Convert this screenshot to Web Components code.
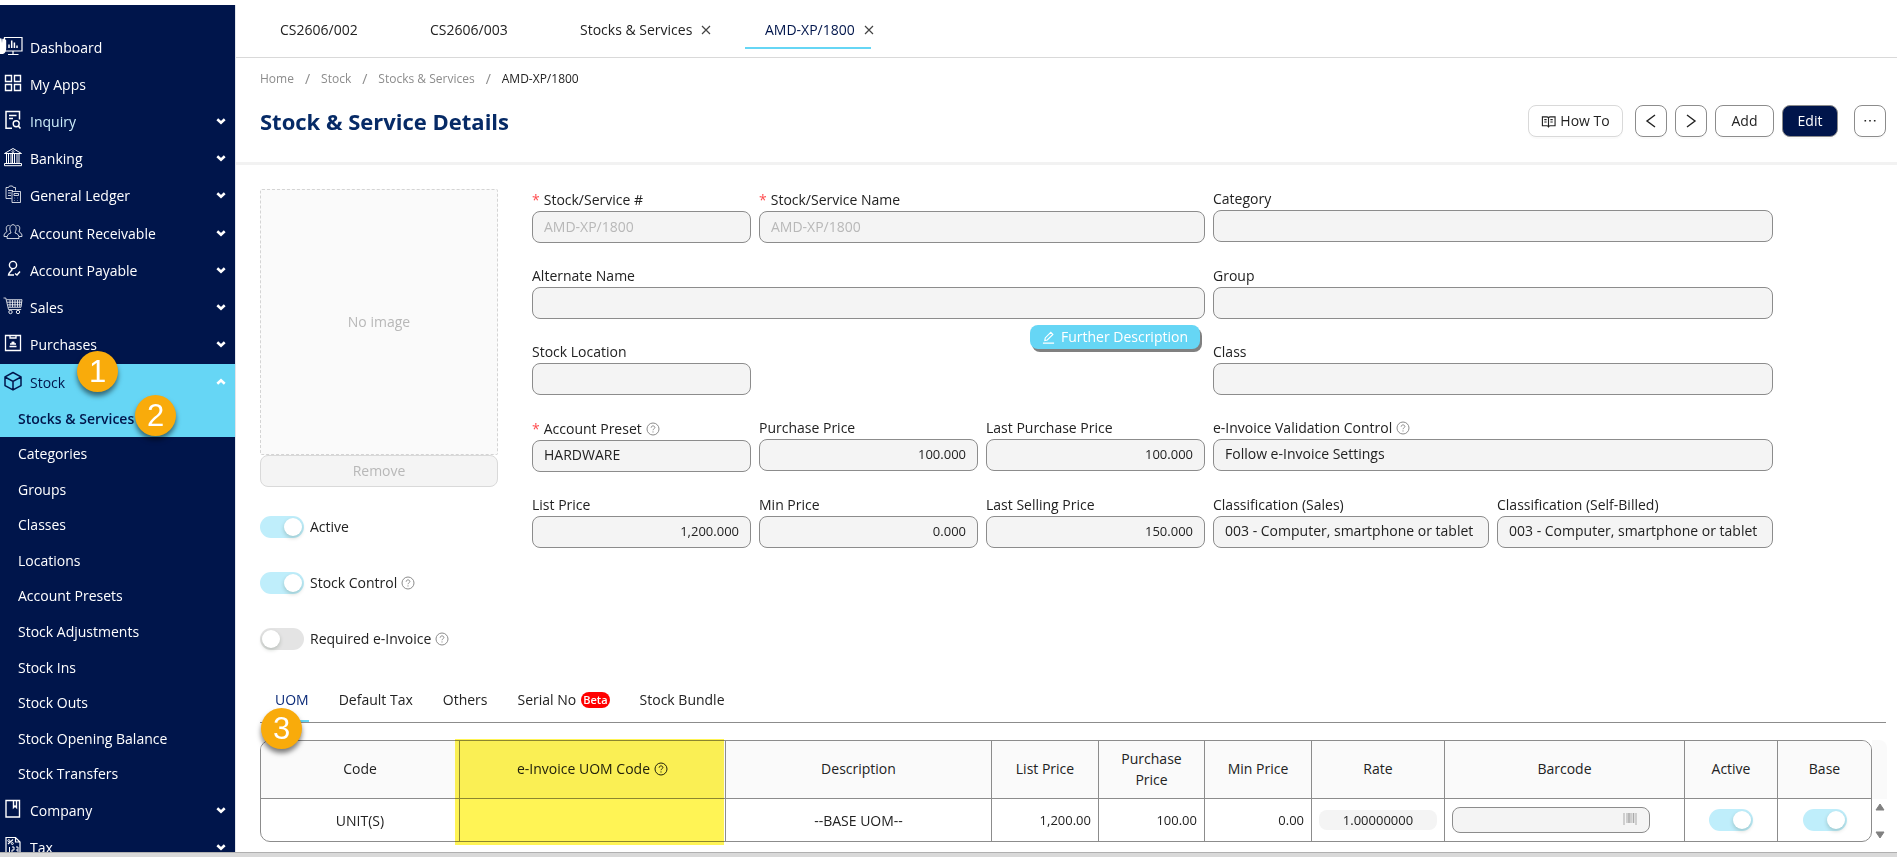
<!DOCTYPE html>
<html lang="en">
<head>
<meta charset="utf-8">
<title>Stock &amp; Service Details</title>
<style>
  html, body { margin: 0; height: 100%; }
  body {
    --navy: #00154b;
    --cyan: #66d6f5;
    --line: #8c8c8c;
    --field: #f4f4f4;
    --text: #222;
    font: 14px/20px "Open Sans", sans-serif;
    color: var(--text);
    background: #fff;
    overflow: hidden;
  }
</style>
</head>
<body>
<stock-app></stock-app>

<script>
// shared helper: attach an open root and fill it
function render(el, html) {
  el.attachShadow({ mode: "open" }).innerHTML = html;
}

const ICONS = {
  dashboard: ["0 0 20 20", `<path d="M1.5 1.5h17.500v13.500H1.500z M10 15v3.500 M5 18.500h10.500" stroke-width="1.200"/><path d="M6 12V8.500 M8.700 12V4.500 M11.400 12V6.500 M14 12V9.500" stroke-width="1.500"/>`],
  apps: ["0 0 20 20", `<path d="M2.500 2.500h6v6h-6z M11.500 2.500h6v6h-6z M2.500 11.500h6v6h-6z M11.500 11.500h6v6h-6z" stroke-width="1.400"/>`],
  inquiry: ["0 0 20 20", `<path d="M9 18.300H3V1.500h13.500v8 M6 5.500h7.500 M6 8.500h4" stroke-width="1.500"/><circle cx="13.200" cy="13.800" r="3" stroke-width="1.400"/><path d="M15.300 16l2.200 2.500" stroke-width="1.600"/>`],
  bank: ["0 0 20 20", `<path d="M1.500 6.500L10 1.500l8.500 5z M1.500 16.500h17v2.200h-17z M3.500 7v9 M5.500 7v9 M8 7v9 M9.500 7v9 M11.500 7v9 M14 7v9 M16 7v9" stroke-width="1"/><circle cx="10" cy="4.600" r="1" stroke-width=".8"/>`],
  ledger: ["0 0 20 20", `<path d="M8.500 14.500H3V3.500h2.500l1-1.500h3l1 1.500h2v3 M5 6.500h5 M5 9h3 M5 11.500h3" stroke-width=".8"/><path d="M9 7.500h8.500v11H9z M11 9.500h4.500v2H11z M11.500 14h.500 M14.500 14h.500 M11.500 16.500h.500 M14.500 16.500h.500" stroke-width=".8"/>`],
  receivable: ["0 0 20 20", `<path d="M7 8a3.200 4 0 1 1 6 0c-.300 1.500-1 2-1 3 3 .800 4 2 4 5.500H4c0-3.500 1-4.700 4-5.500 0-1-.700-1.500-1-3z M6.500 3.500C3.500 3 2.800 5.500 3.500 8c.500 1.500.500 2-.500 2.500-1.500.800-2 1.700-2 4h3 M13.500 3.500c3-.500 3.700 2 3 4.500-.500 1.500-.500 2 .500 2.500 1.500.800 2 1.700 2 4h-3" stroke-width=".8"/>`],
  payable: ["0 0 20 20", `<circle cx="10" cy="6" r="3.600" stroke-width="1.400"/><path d="M8 9.500c2 1 1 1.500-.500 3-1.300 1.300-2 2-2 3.500H11 M12 14.500l2 1.500 3-3.500" stroke-width="1.400"/>`],
  cart: ["0 0 20 20", `<path d="M.500 2h2.300L5.500 13.500h12.700 M3.500 3.700h15.500l-1 7.600H5.200 M4 6.200h15 M4.500 8.800h14 M7 4v7 M9.500 4v7 M12 4v7 M14.500 4v7 M16.700 4v7" stroke-width=".8"/><circle cx="7.500" cy="16" r="1.700" stroke-width=".9"/><circle cx="15" cy="16" r="1.700" stroke-width=".9"/>`],
  purchases: ["0 0 20 20", `<path d="M2.500 2.500h15v15h-15z M7 2.500v2.500h6V2.500 M6.500 13.500h7 M7 11h6 M10 11V8.500 M8.500 9.500h3" stroke-width="1.300"/>`],
  box: ["0 0 20 20", `<path d="M10 1.500l8 4.300v8.800l-8 4.300-8-4.300V5.800z M2 6l8 4.300L18 6 M10 10.300v8.300" stroke-width="1.500" stroke-linejoin="round"/>`],
  company: ["0 0 20 20", `<path d="M3 1.500h13.500v16.500H3z M10.500 1.500v7l1.500-1.500 1.500 1.500v-7" stroke-width="1.400"/>`],
  tax: ["0 0 20 20", `<path d="M3 18.500V1.500h9.500l4.500 4.500v12.500z M12.500 1.500V6H17" stroke-width="1.200"/><path d="M5 8l5-4.500" stroke-width="1.200"/><circle cx="5.800" cy="4.600" r="1" stroke-width="1"/><circle cx="9.300" cy="7.500" r="1" stroke-width="1"/><path d="M6.500 11v6 M9 11h2v3H9v3h2.500 M13 11h2v6h-2 M13 14h2" stroke-width="1"/>`],
  chevron: ["0 0 12 12", `<path d="M2.300 4.300L6 7.700l3.700-3.400" stroke-width="2.600"/>`],
  close: ["0 0 12 12", `<path d="M2 2l8 8 M10 2l-8 8" stroke-width="1.200"/>`],
  left: ["0 0 16 16", `<path d="M12 2L4 8l8 6" stroke-width="1.400"/>`],
  right: ["0 0 16 16", `<path d="M4 2l8 6-8 6" stroke-width="1.400"/>`],
  more: ["0 0 16 16", `<path d="M2.500 7h1.600v1.600H2.500z M7.200 7h1.600v1.600H7.200z M11.900 7h1.600v1.600h-1.600z" fill="currentColor" stroke="none"/>`],
  book: ["0 0 16 16", `<path d="M1.500 3H6q1.500 0 2 1 .500-1 2-1h5v9.500H10q-1.500 0-2 1-.500-1-2-1H1.500z M8 4v9.500 M3.500 6H6 M3.500 8.500H6 M10 6h2.500 M10 8.500h2.500" stroke-width="1.200"/>`],
  edit: ["0 0 14 14", `<path d="M3 10.300l.500-2.800 6-6 2.200 2.200-6 6z M1 13h12" stroke-width="1.200"/>`],
  help: ["0 0 14 14", `<circle cx="7" cy="7" r="6" stroke-width="1"/><path d="M5.200 5.700C5.200 4.500 6 3.900 7 3.900s1.900.600 1.900 1.600C8.900 6.700 7 6.900 7 8.200 M7 9.400v1.100" stroke-width="1"/>`],
  barcode: ["0 0 14 12", `<path d="M1 0v12 M4 0v10 M8 0v10 M13 0v12" stroke-width="1"/><path d="M6 0v10 M10.500 0v10" stroke-width="1.600"/>`],
  up: ["0 0 10 8", `<path d="M5 1L9 7H1z" fill="currentColor" stroke-width="1" stroke-linejoin="round"/>`],
  down: ["0 0 10 8", `<path d="M5 7L9 1H1z" fill="currentColor" stroke-width="1" stroke-linejoin="round"/>`],
  hand: ["0 0 8 18", `<path d="M0 1.500q1.500-1 1.700 1L2 6l.300-4q1.200-1.200 1.700.300L4 6.500l.500-3.500q1.300-1 1.700.500V11c0 3-1 5.500-3.200 6H0z" fill="#fff" stroke="none"/>`],
};

class AppIcon extends HTMLElement {
  connectedCallback() {
    const [box, shape] = ICONS[this.getAttribute("name")];
    render(this, `
      <style>
        :host { display: inline-block; width: 20px; height: 20px; flex: none; }
        svg { display: block; width: 100%; height: 100%; }
      </style>
      <svg viewBox="${box}" fill="none" stroke="currentColor" aria-hidden="true">${shape}</svg>`);
  }
}
customElements.define("app-icon", AppIcon);

// round numbered callout
class StepBadge extends HTMLElement {
  connectedCallback() {
    render(this, `
      <style>
        :host {
          position: absolute; z-index: 5;
          display: grid; place-items: center;
          width: 41px; height: 41px; border-radius: 50%;
          background: #f9ab0b; color: #fff;
          font: 31px/40px "Liberation Sans", sans-serif;
          box-shadow: 0 4px 5px rgba(0, 0, 0, .5);
        }
      </style>
      <slot></slot>`);
  }
}
customElements.define("step-badge", StepBadge);

class ToggleSwitch extends HTMLElement {
  connectedCallback() {
    const help = this.hasAttribute("help") ? `<app-icon name="help"></app-icon>` : "";
    render(this, `
      <style>
        :host { display: block; }
        label { display: flex; align-items: center; gap: 6px; line-height: 22px; }
        :host([bare]) label { justify-content: center; gap: 0; }
        input {
          appearance: none; margin: 0; width: 44px; height: 22px; flex: none;
          border-radius: 11px; background: #e4e4e4; padding: 2px; display: flex;
        }
        input::before {
          content: ""; width: 18px; height: 18px; border-radius: 50%;
          background: #fff; box-shadow: 0 2px 4px rgba(0, 35, 11, .2);
        }
        input:checked { background: #bfeefb; justify-content: flex-end; }
        app-icon { width: 14px; height: 14px; color: #8c8c8c; margin-left: -2px; }
      </style>
      <label><input type="checkbox" role="switch" aria-label="${this.getAttribute("label") || "Toggle"}" ${this.hasAttribute("on") ? "checked" : ""} disabled><slot></slot>${help}</label>`);
  }
}
customElements.define("toggle-switch", ToggleSwitch);

// label + input (or select) pair
class FormField extends HTMLElement {
  connectedCallback() {
    const value = this.getAttribute("value") || "";
    const control = this.hasAttribute("select")
      ? `<select id="c" disabled><option>${value}</option></select>`
      : `<input id="c" type="text" value="${value}" disabled>`;
    render(this, `
      <style>
        :host { display: block; min-width: 0; }
        label { display: flex; align-items: center; gap: 6px; margin-bottom: 1px; white-space: nowrap; }
        :host([required]) label { line-height: 21px; }
        .star { color: #ff4d4f; font-size: 14px; margin-right: -2px; }
        app-icon { width: 14px; height: 14px; color: #8c8c8c; margin-left: -2px; }
        input, select {
          appearance: none; box-sizing: border-box; display: block; width: 100%; height: 32px;
          margin: 0; padding: 0 11px 2px; border: 1px solid var(--line); border-radius: 8px;
          background: var(--field); color: var(--text); font: inherit; opacity: 1;
        }
        :host([muted]) input { color: #b8b8b8; }
        :host([number]) input { text-align: right; font-size: 13px; }
      </style>
      <label for="c">${this.hasAttribute("required") ? `<span class="star">*</span>` : ""}<span>${this.getAttribute("label")}</span>${this.hasAttribute("help") ? `<app-icon name="help"></app-icon>` : ""}</label>
      ${control}`);
  }
}
customElements.define("form-field", FormField);

class NavItem extends HTMLElement {
  connectedCallback() {
    const icon = this.getAttribute("icon");
    const chevron = this.hasAttribute("plain") ? "" : `<app-icon class="chevron" name="chevron"></app-icon>`;
    render(this, `
      <style>
        :host { display: flex; position: relative; color: #fff; }
        :host([hovered]) { color: #cdeefb; }
        :host([open]), :host([current]) { background: var(--cyan); color: var(--navy); }
        :host([current]) { font-weight: 600; }
        a {
          flex: 1; display: flex; align-items: center; gap: 7px;
          padding: 0 8px 0 3px; color: inherit; text-decoration: none; white-space: nowrap;
        }
        :host([sub]) a { padding-left: 18px; }
        .icon { margin-bottom: 4px; }
        :host([hovered]) .icon { color: #fff; }
        .text { flex: 1; }
        .chevron { width: 12px; height: 12px; color: #fff; margin-bottom: 2px; }
        :host([open]) .chevron { transform: rotate(180deg); }
        .hand { position: absolute; left: 0; top: 8px; width: 8px; height: 18px; }
      </style>
      <a href="#">${icon ? `<app-icon class="icon" name="${icon}"></app-icon>` : ""}<span class="text">${this.getAttribute("label")}</span>${icon ? chevron : ""}</a>
      ${this.hasAttribute("pointer") ? `<app-icon class="hand" name="hand"></app-icon>` : ""}
      <slot></slot>`);
  }
}
customElements.define("nav-item", NavItem);

class SideNav extends HTMLElement {
  connectedCallback() {
    render(this, `
      <style>
        :host { display: block; background: var(--navy); border-right: 1px solid #e3e5ea; overflow: hidden; }
        nav { padding-top: 24px; }
        .group, .sub { display: grid; grid-auto-rows: 1fr; }
        .group { min-height: 335px; }
        .sub { min-height: 391px; grid-auto-rows: 1fr; }
        .stock { display: grid; grid-template-rows: 37px; }
        .tail { display: grid; grid-auto-rows: 37px; }
        .one { left: 77px; top: -13px; }
        .two { left: 135px; top: -6px; }
      </style>
      <nav>
        <div class="group">
          <nav-item icon="dashboard" label="Dashboard" plain pointer></nav-item>
          <nav-item icon="apps" label="My Apps" plain></nav-item>
          <nav-item icon="inquiry" label="Inquiry" hovered></nav-item>
          <nav-item icon="bank" label="Banking"></nav-item>
          <nav-item icon="ledger" label="General Ledger"></nav-item>
          <nav-item icon="receivable" label="Account Receivable"></nav-item>
          <nav-item icon="payable" label="Account Payable"></nav-item>
          <nav-item icon="cart" label="Sales"></nav-item>
          <nav-item icon="purchases" label="Purchases"></nav-item>
        </div>
        <div class="stock">
          <nav-item icon="box" label="Stock" open><step-badge class="one">1</step-badge></nav-item>
        </div>
        <div class="sub">
          <nav-item sub current label="Stocks &amp; Services"><step-badge class="two">2</step-badge></nav-item>
          <nav-item sub label="Categories"></nav-item>
          <nav-item sub label="Groups"></nav-item>
          <nav-item sub label="Classes"></nav-item>
          <nav-item sub label="Locations"></nav-item>
          <nav-item sub label="Account Presets"></nav-item>
          <nav-item sub label="Stock Adjustments"></nav-item>
          <nav-item sub label="Stock Ins"></nav-item>
          <nav-item sub label="Stock Outs"></nav-item>
          <nav-item sub label="Stock Opening Balance"></nav-item>
          <nav-item sub label="Stock Transfers"></nav-item>
        </div>
        <div class="tail">
          <nav-item icon="company" label="Company"></nav-item>
          <nav-item icon="tax" label="Tax"></nav-item>
        </div>
      </nav>`);
  }
}
customElements.define("side-nav", SideNav);

class PageTabs extends HTMLElement {
  connectedCallback() {
    render(this, `
      <style>
        :host { display: block; border-bottom: 1px solid #d9d9d9; }
        nav { display: flex; gap: 32px; padding: 8px 0 8px 24px; }
        .tab { display: flex; align-items: center; gap: 8px; padding-left: 20px; height: 34px; border-bottom: 2px solid transparent; }
        .s { width: 98px; }
        .m { width: 133px; }
        .l { width: 106px; }
        .active { border-color: var(--cyan); color: var(--navy); }
        a { color: inherit; text-decoration: none; white-space: nowrap; }
        button { border: 0; background: none; padding: 0; color: #444; display: flex; }
        app-icon { width: 12px; height: 12px; }
      </style>
      <nav>
        <div class="tab s"><a href="#">CS2606/002</a></div>
        <div class="tab s"><a href="#">CS2606/003</a></div>
        <div class="tab m"><a href="#">Stocks &amp; Services</a><button aria-label="Close"><app-icon name="close"></app-icon></button></div>
        <div class="tab l active"><a href="#">AMD-XP/1800</a><button aria-label="Close"><app-icon name="close"></app-icon></button></div>
      </nav>`);
  }
}
customElements.define("page-tabs", PageTabs);

class PageHeader extends HTMLElement {
  connectedCallback() {
    render(this, `
      <style>
        :host { display: block; padding: 10px 11px 25px 24px; border-bottom: 3px solid #f2f2f2; }
        nav { display: flex; gap: 11px; font-size: 12px; line-height: 22px; color: #8c8c8c; }
        nav i { font-style: normal; font-size: 14px; }
        nav a { color: inherit; text-decoration: none; }
        nav a:last-child { color: var(--text); }
        .row { display: flex; justify-content: space-between; align-items: center; margin-top: 15px; }
        h1 { margin: 0; font-size: 22px; line-height: 30px; font-weight: 700; color: #062a66; }
        .actions { display: flex; gap: 8px; }
        button {
          height: 32px; min-width: 32px; padding: 0; border: 1px solid var(--line); border-radius: 8px;
          background: #fff; color: var(--text); font: inherit;
          display: flex; align-items: center; justify-content: center; gap: 4px;
          box-shadow: 0 2px 0 rgba(0, 0, 0, .02);
        }
        .how { width: 95px; border-color: #d9d9d9; margin-right: 4px; }
        .add { width: 59px; }
        .edit { width: 56px; background: var(--navy); color: #fff; margin-right: 8px; }
        app-icon { width: 16px; height: 16px; }
        .how app-icon { width: 15px; height: 15px; }
      </style>
      <nav><a href="#">Home</a><i>/</i><a href="#">Stock</a><i>/</i><a href="#">Stocks &amp; Services</a><i>/</i><a href="#">AMD-XP/1800</a></nav>
      <div class="row">
        <h1>Stock &amp; Service Details</h1>
        <div class="actions">
          <button class="how"><app-icon name="book"></app-icon>How To</button>
          <button aria-label="Previous"><app-icon name="left"></app-icon></button>
          <button aria-label="Next"><app-icon name="right"></app-icon></button>
          <button class="add">Add</button>
          <button class="edit">Edit</button>
          <button aria-label="More"><app-icon name="more"></app-icon></button>
        </div>
      </div>`);
  }
}
customElements.define("page-header", PageHeader);

class StockForm extends HTMLElement {
  connectedCallback() {
    render(this, `
      <style>
        :host { display: grid; grid-template-columns: 238px 1fr; gap: 34px; }
        .image {
          box-sizing: border-box; height: 266px; border: 1px dashed #d4d4d4; border-radius: 2px;
          background: #fafafa; color: #b8b8b8; display: grid; place-items: center;
        }
        .remove {
          display: block; width: 100%; height: 32px; border: 1px solid #d9d9d9; border-radius: 8px;
          background: var(--field); color: #b8b8b8; font: inherit; padding: 0;
        }
        .switches { display: grid; gap: 34px; margin-top: 29px; }
        .fields {
          display: grid; grid-template-columns: 219fr 219fr 219fr 276fr 276fr;
          gap: 23px 8px; align-content: start; padding-right: 113px;
        }
        .w2 { grid-column: span 2; }
        .w3 { grid-column: span 3; }
        .further {
          grid-column: 2 / span 2; justify-self: end; align-self: start;
          margin: -17px 5px 0 0; height: 24px; padding: 0 12px; border: 0; border-radius: 8px;
          background: var(--cyan); color: #fff; font: inherit; box-shadow: 2px 3px 0 #808080;
          display: flex; align-items: center; gap: 6px;
        }
        .further app-icon { width: 13px; height: 13px; }
      </style>
      <div>
        <div class="image">No image</div>
        <button class="remove" disabled>Remove</button>
        <div class="switches">
          <toggle-switch on label="Active">Active</toggle-switch>
          <toggle-switch on help label="Stock Control">Stock Control</toggle-switch>
          <toggle-switch help label="Required e-Invoice">Required e-Invoice</toggle-switch>
        </div>
      </div>
      <div class="fields">
        <form-field required muted label="Stock/Service #" value="AMD-XP/1800"></form-field>
        <form-field class="w2" required muted label="Stock/Service Name" value="AMD-XP/1800"></form-field>
        <form-field class="w2" select label="Category"></form-field>

        <form-field class="w3" label="Alternate Name"></form-field>
        <form-field class="w2" select label="Group"></form-field>

        <form-field select label="Stock Location"></form-field>
        <button class="further"><app-icon name="edit"></app-icon>Further Description</button>
        <form-field class="w2" select label="Class"></form-field>

        <form-field required help select label="Account Preset" value="HARDWARE"></form-field>
        <form-field number label="Purchase Price" value="100.000"></form-field>
        <form-field number label="Last Purchase Price" value="100.000"></form-field>
        <form-field class="w2" help select label="e-Invoice Validation Control" value="Follow e-Invoice Settings"></form-field>

        <form-field number label="List Price" value="1,200.000"></form-field>
        <form-field number label="Min Price" value="0.000"></form-field>
        <form-field number label="Last Selling Price" value="150.000"></form-field>
        <form-field select label="Classification (Sales)" value="003 - Computer, smartphone or tablet"></form-field>
        <form-field select label="Classification (Self-Billed)" value="003 - Computer, smartphone or tablet"></form-field>
      </div>`);
  }
}
customElements.define("stock-form", StockForm);

class DetailTabs extends HTMLElement {
  connectedCallback() {
    render(this, `
      <style>
        :host { display: block; position: relative; margin-top: 39px; border-bottom: 1px solid var(--line); }
        nav { display: flex; gap: 30px; padding-left: 15px; }
        a { color: inherit; text-decoration: none; line-height: 22px; padding-bottom: 9px; border-bottom: 2px solid transparent; display: flex; align-items: center; gap: 5px; }
        a.active { color: #0a2a78; border-color: var(--cyan); }
        .beta { background: #f00; color: #fff; font-size: 11px; line-height: 16px; font-weight: 600; border-radius: 8px; padding: 0 2px; }
        step-badge { left: 1px; top: 19px; }
      </style>
      <nav>
        <a class="active" href="#">UOM</a>
        <a href="#">Default Tax</a>
        <a href="#">Others</a>
        <a href="#">Serial No <span class="beta">Beta</span></a>
        <a href="#">Stock Bundle</a>
      </nav>
      <step-badge>3</step-badge>`);
  }
}
customElements.define("detail-tabs", DetailTabs);

class UomTable extends HTMLElement {
  connectedCallback() {
    render(this, `
      <style>
        :host { display: flex; margin-top: 17px; }
        table {
          flex: 1; width: 100%; table-layout: fixed; border-collapse: separate; border-spacing: 0;
          border: 1px solid var(--line); border-radius: 10px;
        }
        th, td { box-sizing: border-box; padding: 0 7px; text-align: center; border-right: 1px solid var(--line); line-height: 21px; }
        th:last-child, td:last-child { border-right: 0; }
        th { height: 58px; padding: 0 12px 2px; background: #fafafa; font-weight: 500; border-bottom: 1px solid var(--line); position: relative; }
        th:first-child { border-top-left-radius: 9px; }
        th:last-child { border-top-right-radius: 9px; }
        td { height: 42px; }
        .num { text-align: right; font-size: 13px; }
        .head { display: flex; align-items: center; justify-content: center; gap: 4px; }
        .head app-icon { width: 14px; height: 14px; }
        .mark { position: absolute; left: -5px; right: 1px; top: -2px; height: 106px; background: #fff455; mix-blend-mode: multiply; }
        input { box-sizing: border-box; font: inherit; color: var(--text); background: var(--field); margin: 0; }
        .rate { width: 100%; height: 20px; border: 0; border-radius: 8px; text-align: center; font-size: 13px; display: block; }
        .code { position: relative; width: 198px; max-width: 100%; }
        .code input { width: 100%; height: 26px; border: 1px solid var(--line); border-radius: 8px; display: block; }
        .code app-icon { position: absolute; right: 13px; top: 6px; width: 14px; height: 12px; color: #aaa; }
        .bar { width: 15px; flex: none; display: flex; flex-direction: column; }
        .bar div { background: #fafafa; height: 59px; border-top-right-radius: 8px; }
        .bar span { flex: 1; display: flex; flex-direction: column; align-items: center; justify-content: space-between; padding: 4px 0 3px; color: #808080; }
        .bar app-icon { width: 10px; height: 8px; }
      </style>
      <table>
        <colgroup>
          <col style="width:199px"><col style="width:266px"><col style="width:266px"><col style="width:107px"><col style="width:106px">
          <col style="width:107px"><col style="width:133px"><col style="width:240px"><col style="width:93px"><col style="width:93px">
        </colgroup>
        <thead>
          <tr>
            <th>Code</th>
            <th><span class="head">e-Invoice UOM Code<app-icon name="help"></app-icon></span><span class="mark"></span></th>
            <th>Description</th><th>List Price</th><th>Purchase Price</th><th>Min Price</th>
            <th>Rate</th><th>Barcode</th><th>Active</th><th>Base</th>
          </tr>
        </thead>
        <tbody>
          <tr>
            <td>UNIT(S)</td><td></td><td>--BASE UOM--</td>
            <td class="num">1,200.00</td><td class="num">100.00</td><td class="num">0.00</td>
            <td><input class="rate" value="1.00000000" aria-label="Rate" disabled></td>
            <td><div class="code"><input aria-label="Barcode" disabled><app-icon name="barcode"></app-icon></div></td>
            <td><toggle-switch bare on label="Active"></toggle-switch></td>
            <td><toggle-switch bare on label="Base"></toggle-switch></td>
          </tr>
        </tbody>
      </table>
      <div class="bar"><div></div><span><app-icon name="up"></app-icon><app-icon name="down"></app-icon></span></div>`);
  }
}
customElements.define("uom-table", UomTable);

class StockApp extends HTMLElement {
  connectedCallback() {
    render(this, `
      <style>
        :host { display: grid; grid-template-columns: 236px 1fr; grid-template-rows: minmax(0, 1fr) 5px; height: 100vh; padding-top: 5px; box-sizing: border-box; }
        main { min-width: 0; overflow: hidden; }
        .content { padding: 24px 11px 0 24px; }
        .edge { grid-column: 1 / -1; box-sizing: border-box; background: #d9d9d9; border-top: 1px solid #b0b0b0; }
      </style>
      <side-nav></side-nav>
      <main>
        <page-tabs></page-tabs>
        <page-header></page-header>
        <div class="content">
          <stock-form></stock-form>
          <detail-tabs></detail-tabs>
          <uom-table></uom-table>
        </div>
      </main>
      <div class="edge"></div>`);
  }
}
customElements.define("stock-app", StockApp);
</script>
</body>
</html>
